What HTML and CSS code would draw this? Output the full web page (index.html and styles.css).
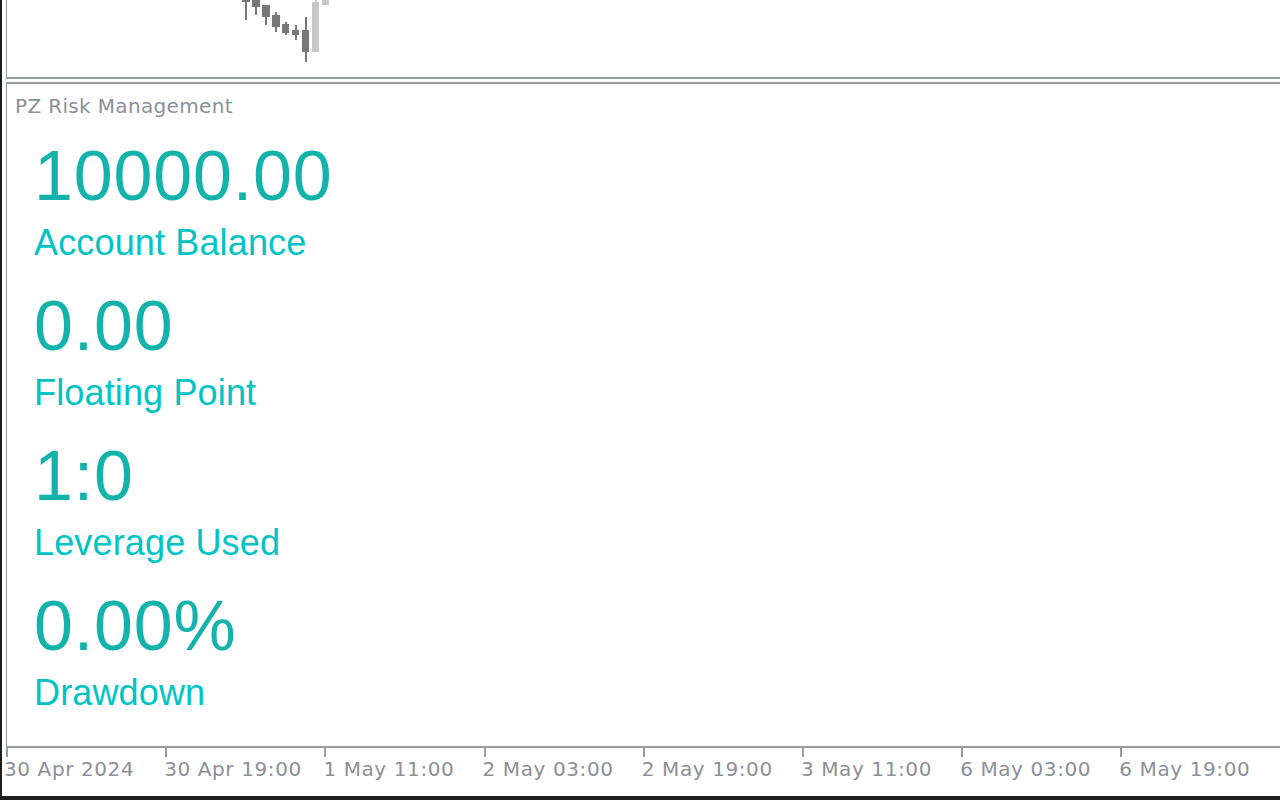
FILE: index.html
```html
<!DOCTYPE html>
<html lang="en">
<head>
  <meta charset="UTF-8" />
  <meta name="viewport" content="width=device-width, initial-scale=1.0" />
  <title>PZ Risk Management</title>
  <link rel="stylesheet" href="styles.css">
</head>
<body>

  <div class="screen">
    <div class="chart-pane">
      <svg class="candles" width="1273" height="77" viewBox="0 0 1273 77">
        <g transform="translate(-7 0)">
          <!-- bearish candles -->
          <g fill="#787878">
            <rect x="245" y="0" width="2" height="20" />
            <rect x="242" y="0" width="8" height="2" />
            <rect x="255" y="0" width="2" height="15" />
            <rect x="252" y="0" width="8" height="7" />
            <rect x="265" y="5" width="2" height="20" />
            <rect x="262" y="5" width="8" height="12" />
            <rect x="275" y="12" width="2" height="20" />
            <rect x="272" y="15" width="8" height="12" />
            <rect x="285" y="22" width="2" height="13" />
            <rect x="282" y="24" width="7" height="9" />
            <rect x="295" y="25" width="2" height="15" />
            <rect x="292" y="30" width="7" height="5" />
            <rect x="305" y="17" width="2" height="45" />
            <rect x="302" y="30" width="7" height="22" />
          </g>
          <!-- bullish candles -->
          <g fill="#c8c8c8">
            <rect x="315" y="0" width="2" height="4" />
            <rect x="312" y="2" width="7" height="50" />
            <rect x="322" y="0" width="7" height="5" />
          </g>
        </g>
      </svg>
    </div>

    <div class="stats-pane">
      <div class="pane-title">PZ Risk Management</div>
      <div class="metrics">
        <div class="metric">
          <div class="metric-value">10000.00</div>
          <div class="metric-label">Account Balance</div>
        </div>
        <div class="metric">
          <div class="metric-value">0.00</div>
          <div class="metric-label">Floating Point</div>
        </div>
        <div class="metric">
          <div class="metric-value">1:0</div>
          <div class="metric-label">Leverage Used</div>
        </div>
        <div class="metric">
          <div class="metric-value">0.00%</div>
          <div class="metric-label">Drawdown</div>
        </div>
      </div>
    </div>

    <div class="time-axis">
      <div class="tick first"><span>30 Apr 2024</span></div>
      <div class="tick"><span>30 Apr 19:00</span></div>
      <div class="tick"><span>1 May 11:00</span></div>
      <div class="tick"><span>2 May 03:00</span></div>
      <div class="tick"><span>2 May 19:00</span></div>
      <div class="tick"><span>3 May 11:00</span></div>
      <div class="tick"><span>6 May 03:00</span></div>
      <div class="tick"><span>6 May 19:00</span></div>
      <div class="tick"><span>7 May 11:00</span></div>
    </div>
  </div>

</body>
</html>
```

FILE: styles.css
```css
:root {
  --frame: #1f1f1f;
  --grid: #969aa1;
  --muted: #8b9097;
  --value: #13b3ab;
  --label: #00c3c6;
}

html, body {
  margin: 0;
  padding: 0;
  background: var(--frame);
  height: 100%;
  overflow: hidden;
}

body {
  padding-left: 2px;
  box-sizing: border-box;
}

.screen {
  width: 1278px;
  height: 796px;
  background: #fff;
  overflow: hidden;
}

.chart-pane {
  margin-left: 4px;
  height: 77px;
  border-left: 1px solid var(--grid);
  border-bottom: 2px solid var(--grid);
  overflow: hidden;
}

.candles {
  display: block;
}

.stats-pane {
  margin-top: 3px;
  margin-left: 4px;
  height: 650px;
  border-left: 1px solid var(--grid);
  border-top: 2px solid var(--grid);
  border-bottom: 2px solid var(--grid);
  padding: 12px 0 0 8px;
}

.pane-title {
  font-family: "DejaVu Sans", sans-serif;
  font-size: 20px;
  line-height: 20px;
  letter-spacing: 0.35px;
  color: var(--muted);
}

.metrics {
  margin-top: 25px;
  padding-left: 18px;
}

.metric {
  margin-bottom: 30px;
}

.metric-value {
  margin-left: 1px;
  font-family: "Liberation Sans", Arial, sans-serif;
  font-size: 70px;
  line-height: 70px;
  letter-spacing: 0.8px;
  color: var(--value);
}

.metric-label {
  margin-top: 14px;
  margin-left: 1px;
  font-family: "Liberation Sans", Arial, sans-serif;
  font-size: 36px;
  line-height: 36px;
  letter-spacing: 0.15px;
  color: var(--label);
}

.time-axis {
  display: flex;
  padding-left: 4px;
  height: 48px;
}

.tick {
  flex: none;
  width: 159.2px;
  white-space: nowrap;
}

.tick::before {
  content: "";
  display: block;
  width: 2px;
  height: 9px;
  background: var(--grid);
}

.tick span {
  display: block;
  margin-top: 2px;
  margin-left: -1px;
  font-family: "DejaVu Sans", sans-serif;
  font-size: 20px;
  line-height: 20px;
  letter-spacing: 0.6px;
  color: var(--muted);
}

.tick.first span {
  margin-left: -2px;
}
```
